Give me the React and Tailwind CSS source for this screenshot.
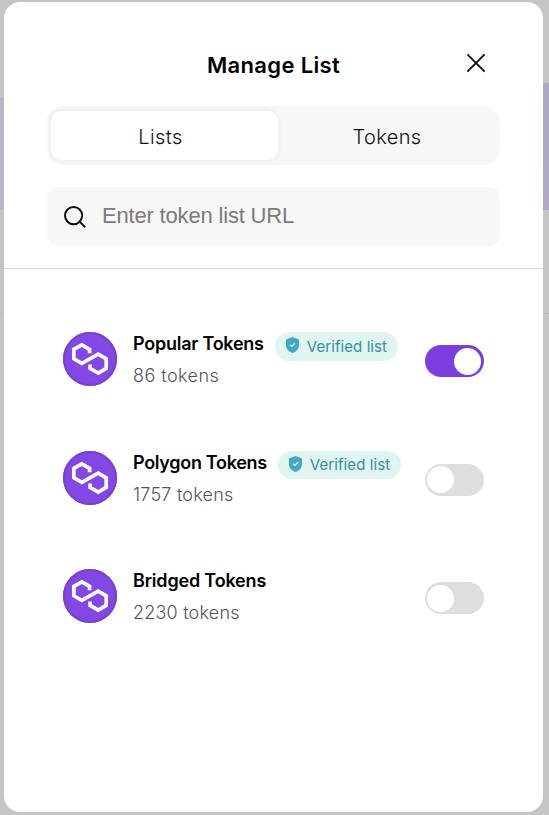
const lists = [
  { name: "Popular Tokens", count: "86 tokens", verified: true, on: true, nameSpacing: "tracking-[-0.25px]", countSpacing: "tracking-[0.45px]" },
  { name: "Polygon Tokens", count: "1757 tokens", verified: true, on: false, nameSpacing: "tracking-[-0.31px]", countSpacing: "tracking-[0.22px]" },
  { name: "Bridged Tokens", count: "2230 tokens", verified: false, on: false, nameSpacing: "tracking-[-0.18px]", countSpacing: "tracking-[0.2px]" },
];

function PolygonLogo() {
  return (
    <svg className="block size-[54px] shrink-0" viewBox="0 0 54 54" fill="none">
      <circle cx="27" cy="27" r="27" fill="#8247e5" />
      <circle cx="27" cy="27" r="26" stroke="#7541ce" strokeWidth="2" />
      <path
        d="M26.6 21.3V17.4L18.8 12.8L10.8 17.4V26.8L18.8 31.4L35.2 22.2L43.2 26.8V36.4L35.2 41L27.1 36.4V32.4"
        stroke="#fff"
        strokeWidth="3.7"
      />
    </svg>
  );
}

function VerifiedBadge() {
  return (
    <span className="ml-[11px] flex h-full w-[123px] shrink-0 items-center rounded-full bg-[#e0f4f1] pl-[11px] text-[15px] text-[#35909f]">
      <svg className="mr-2 block h-[16px] w-[13px] shrink-0 -translate-y-px" viewBox="0 0 13 16" fill="none">
        <path d="M6.5 0L13 2.5V8C13 12 10.2 14.6 6.5 16C2.8 14.6 0 12 0 8V2.5Z" fill="#41a9c1" />
        <path d="M4.2 7.7L5.9 9.4L9 6.2" stroke="#e0f4f1" strokeWidth="1.3" />
      </svg>
      <span className="whitespace-nowrap pt-px tracking-[0.08px]">Verified list</span>
    </span>
  );
}

function Toggle({ on }) {
  return (
    <button
      className={
        "mt-[13px] flex h-8 w-[59px] shrink-0 items-center rounded-full pl-[2px] pr-[3px] " +
        (on ? "justify-end bg-[#7c3ee1]" : "justify-start bg-[#dddee0]")
      }
    >
      <span className="size-[27px] rounded-full bg-white" />
    </button>
  );
}

export default function App() {
  return (
    <div className="relative h-[815px] w-[549px] overflow-hidden bg-[#c5c5c5] pl-1 pt-[2px] font-['Inter',sans-serif]">
      <div className="absolute left-0 top-[98px] h-[112px] w-1 bg-[#bab3c6]" />
      <div className="absolute right-0 top-[83px] h-[127px] w-[6px] bg-linear-to-b from-[#aeaac4] to-[#b3a9c7]" />
      <div className="absolute left-0 top-[313px] h-px w-full bg-[#b9b9b9]" />
      <main className="relative h-[810px] w-[539px] rounded-[16px] bg-white">
        <header className="h-[267px] border-b border-[#dddddf] px-[43px] pt-[47px]">
          <div className="relative flex h-8 items-center justify-center">
            <h1 className="text-[22px] font-semibold tracking-[0.35px] text-black">Manage List</h1>
            <button className="absolute right-[14px] top-[4px]">
              <svg className="block size-5" viewBox="0 0 20 20" fill="none" stroke="#111" strokeWidth="1.9">
                <path d="M1.4 1.4L18.6 18.6M18.6 1.4L1.4 18.6" />
              </svg>
            </button>
          </div>
          <div className="mt-[25px] flex h-[59px] rounded-[16px] bg-[#f7f7f7] p-1 pt-[5px] text-[20px] text-[#111]">
            <button className="flex h-[49px] w-[227px] items-center justify-center rounded-[11px] bg-white pr-2 pt-[2px] font-light tracking-[0.4px] shadow-[0_0_6px_rgba(0,0,0,0.07)]">
              Lists
            </button>
            <button className="flex h-[49px] flex-1 items-center justify-center pt-[2px] font-light tracking-[0.35px]">Tokens</button>
          </div>
          <label className="mt-[22px] flex h-[59px] items-center rounded-[11px] bg-[#f7f7f7] pl-[17px]">
            <svg className="block size-[22px]" viewBox="0 0 22 22" fill="none" stroke="#0b0d10" strokeWidth="2">
              <circle cx="9.6" cy="9.6" r="8.6" />
              <path d="M15.6 15.6L21.1 21.1" />
            </svg>
            <input
              className="mb-[2px] ml-4 w-[300px] bg-transparent font-['Liberation_Sans',Arial,sans-serif] text-[22px] tracking-[-0.18px] outline-none placeholder:text-[#7b7b7b]"
              placeholder="Enter token list URL"
            />
          </label>
        </header>
        <section className="flex flex-col gap-[64.5px] pl-[59px] pr-[59px] pt-[63px]">
          {lists.map((list) => (
            <div key={list.name} className="flex h-[54px]">
              <PolygonLogo />
              <div className="ml-4 min-w-0 flex-1">
                <div className="flex h-[28.5px] items-start">
                  <span className={"whitespace-nowrap text-[18px] font-semibold leading-[23px] text-black " + list.nameSpacing}>{list.name}</span>
                  {list.verified && <VerifiedBadge />}
                </div>
                <div className={"mt-[3.5px] text-[18px] font-light leading-[24px] text-[#52555d] " + list.countSpacing}>{list.count}</div>
              </div>
              <Toggle on={list.on} />
            </div>
          ))}
        </section>
      </main>
    </div>
  );
}
